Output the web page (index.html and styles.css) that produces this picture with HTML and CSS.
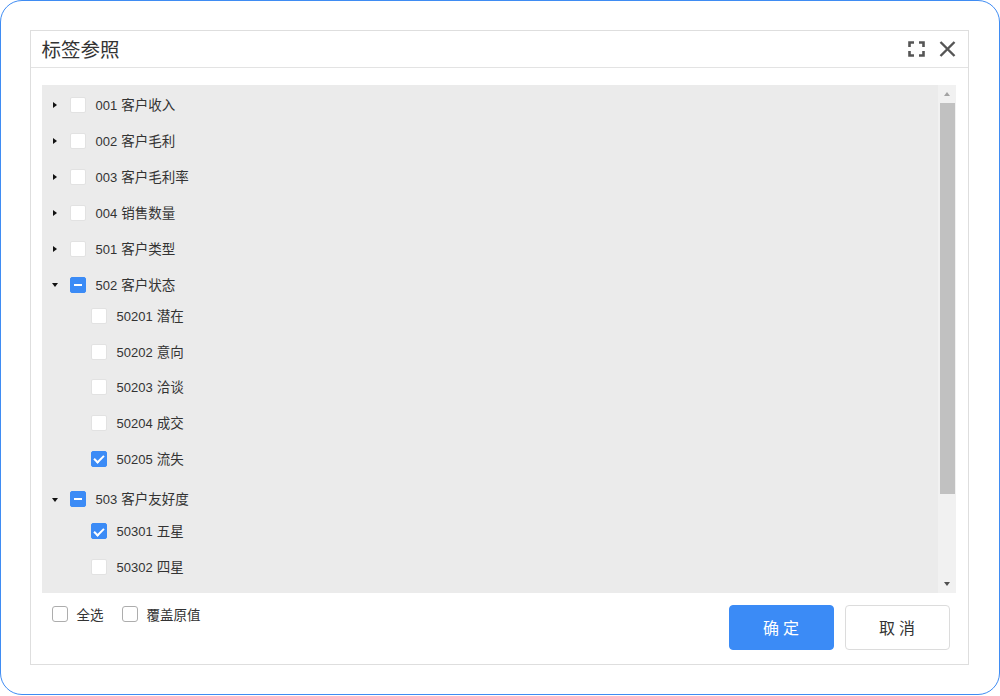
FILE: index.html
```html
<!DOCTYPE html>
<html lang="zh-CN">
<head>
<meta charset="utf-8">
<title>标签参照</title>
<link rel="stylesheet" href="styles.css">
</head>
<body>
<div class="frame">
  <div class="dialog">
    <div class="dlg-head">
      <div class="dlg-title">标签参照</div>
      <div class="dlg-tools">
        <svg class="tool" width="17" height="16" viewBox="0 0 17 16"><path d="M1.5 6V1.5H6M11 1.5H15.5V6M15.5 10V14.5H11M6 14.5H1.5V10" fill="none" stroke="#555" stroke-width="2.6"/></svg>
        <svg class="tool" width="17" height="16" viewBox="0 0 17 16"><path d="M1.5 1L15.5 15M15.5 1L1.5 15" fill="none" stroke="#555" stroke-width="2.4"/></svg>
      </div>
    </div>
    <div class="dlg-body">
      <div class="tree">
        <div class="tree-list">
          <div class="node"><span class="toggle closed"></span><span class="cb"></span><span class="label"><span class="code">001</span>客户收入</span></div>
          <div class="node"><span class="toggle closed"></span><span class="cb"></span><span class="label"><span class="code">002</span>客户毛利</span></div>
          <div class="node"><span class="toggle closed"></span><span class="cb"></span><span class="label"><span class="code">003</span>客户毛利率</span></div>
          <div class="node"><span class="toggle closed"></span><span class="cb"></span><span class="label"><span class="code">004</span>销售数量</span></div>
          <div class="node"><span class="toggle closed"></span><span class="cb"></span><span class="label"><span class="code">501</span>客户类型</span></div>
          <div class="node"><span class="toggle open"></span><span class="cb part"></span><span class="label"><span class="code">502</span>客户状态</span></div>
          <div class="children">
            <div class="node child"><span class="toggle"></span><span class="cb"></span><span class="label"><span class="code">50201</span>潜在</span></div>
            <div class="node child"><span class="toggle"></span><span class="cb"></span><span class="label"><span class="code">50202</span>意向</span></div>
            <div class="node child"><span class="toggle"></span><span class="cb"></span><span class="label"><span class="code">50203</span>洽谈</span></div>
            <div class="node child"><span class="toggle"></span><span class="cb"></span><span class="label"><span class="code">50204</span>成交</span></div>
            <div class="node child"><span class="toggle"></span><span class="cb on"></span><span class="label"><span class="code">50205</span>流失</span></div>
          </div>
          <div class="node"><span class="toggle open"></span><span class="cb part"></span><span class="label"><span class="code">503</span>客户友好度</span></div>
          <div class="children">
            <div class="node child"><span class="toggle"></span><span class="cb on"></span><span class="label"><span class="code">50301</span>五星</span></div>
            <div class="node child"><span class="toggle"></span><span class="cb"></span><span class="label"><span class="code">50302</span>四星</span></div>
          </div>
        </div>
        <div class="scrollbar">
          <div class="sb-btn"><span class="arrow up"></span></div>
          <div class="sb-track"><div class="sb-thumb"></div></div>
          <div class="sb-btn"><span class="arrow down"></span></div>
        </div>
      </div>
    </div>
    <div class="dlg-foot">
      <div class="opts">
        <label class="opt"><span class="box"></span>全选</label>
        <label class="opt"><span class="box"></span>覆盖原值</label>
      </div>
      <div class="btns">
        <button class="btn primary">确定</button>
        <button class="btn">取消</button>
      </div>
    </div>
  </div>
</div>
</body>
</html>
```
FILE: styles.css
```css
* { box-sizing: border-box; }
html, body { margin: 0; padding: 0; background: #fff; }
body {
  font-family: "Liberation Sans", "Noto Sans CJK SC", Arial, sans-serif;
  color: #333;
}
.frame {
  width: 1000px;
  height: 695px;
  border: 1.5px solid #3f8cf3;
  border-radius: 22px;
  padding: 28.5px 30px 28.5px 28.5px;
  background: #fff;
}
.dialog {
  width: 939px;
  height: 635px;
  border: 1px solid #dedede;
  display: flex;
  flex-direction: column;
}
.dlg-head {
  height: 37px;
  border-bottom: 1px solid #e3e3e3;
  display: flex;
  align-items: center;
  justify-content: space-between;
  padding: 0 12px 0 11px;
  flex: none;
}
.dlg-title {
  font-family: "Noto Sans CJK SC", sans-serif;
  font-size: 19.5px;
  color: #333;
  line-height: 1;
  margin-top: 1px;
}
.dlg-tools { display: flex; gap: 14px; align-items: center; margin-top: 1px; }
.tool { display: block; }
.dlg-body {
  flex: 1;
  padding: 17px 12px 0 11px;
  display: flex;
  min-height: 0;
}
.tree {
  flex: 1;
  display: flex;
  background: #ebebeb;
  min-height: 0;
}
.tree-list {
  flex: 1;
  overflow: hidden;
  padding-top: 2px;
}
.node {
  height: 36px;
  display: flex;
  align-items: center;
  padding-left: 7px;
}
.node.child { height: 35.6px; padding-left: 28px; }
.children { margin: -4px 0 5px; }
.toggle {
  width: 12px;
  height: 12px;
  margin-right: 9px;
  display: flex;
  align-items: center;
  justify-content: center;
}
.toggle.closed::before {
  content: "";
  border-left: 4px solid #111;
  border-top: 3.5px solid transparent;
  border-bottom: 3.5px solid transparent;
  margin-left: 1px;
}
.toggle.open::before {
  content: "";
  border-top: 4px solid #111;
  border-left: 3.5px solid transparent;
  border-right: 3.5px solid transparent;
  margin-top: 1px;
}
.cb {
  width: 16px;
  height: 16px;
  background: #fff;
  border: 1px solid #e2e2e2;
  border-radius: 2px;
  margin-right: 10px;
  flex: none;
  position: relative;
}
.cb.on, .cb.part {
  background: #3b8bf6;
  border-color: #3b8bf6;
}
.cb.part::after {
  content: "";
  position: absolute;
  left: 3px;
  top: 6px;
  width: 8px;
  height: 2px;
  background: #fff;
}
.cb.on::after {
  content: "";
  position: absolute;
  left: 4.5px;
  top: 1.5px;
  width: 4px;
  height: 8px;
  border-right: 2px solid #fff;
  border-bottom: 2px solid #fff;
  transform: rotate(45deg);
}
.label {
  font-family: "Noto Sans CJK SC", sans-serif;
  font-size: 13.5px;
  color: #333;
  white-space: nowrap;
  line-height: 1;
}
.code {
  font-family: "Liberation Sans", Arial, sans-serif;
  font-size: 13px;
  margin-right: 4px;
}
.scrollbar {
  width: 18px;
  flex: none;
  background: #f1f1f1;
  display: flex;
  flex-direction: column;
}
.sb-btn {
  height: 18px;
  flex: none;
  display: flex;
  align-items: center;
  justify-content: center;
}
.arrow.up {
  border-bottom: 4px solid #a3a3a3;
  border-left: 3.5px solid transparent;
  border-right: 3.5px solid transparent;
}
.arrow.down {
  border-top: 4px solid #505050;
  border-left: 3.5px solid transparent;
  border-right: 3.5px solid transparent;
}
.sb-track { flex: 1; padding: 0 1px 0 2px; }
.sb-thumb { height: 391px; background: #c1c1c1; }
.dlg-foot {
  flex: none;
  height: 71px;
  display: flex;
  justify-content: space-between;
  align-items: flex-start;
  padding: 12px 18px 0 21px;
}
.opts { display: flex; gap: 18px; margin-top: 1px; }
.opt {
  display: flex;
  align-items: center;
  font-family: "Noto Sans CJK SC", sans-serif;
  font-size: 13.5px;
  color: #333;
  height: 16px;
}
.box {
  width: 16px;
  height: 16px;
  border: 1px solid #adadad;
  border-radius: 3px;
  background: #fff;
  margin-right: 9px;
}
.btns { display: flex; gap: 11px; }
.btn {
  width: 105px;
  height: 45px;
  border: 1px solid #dcdcdc;
  border-radius: 4px;
  background: #fff;
  font-family: "Noto Sans CJK SC", sans-serif;
  font-size: 16px;
  letter-spacing: 4px;
  padding: 0 0 0 4px;
  color: #333;
}
.btn.primary {
  background: #3b8bf6;
  border-color: #3b8bf6;
  color: #fff;
}
```
